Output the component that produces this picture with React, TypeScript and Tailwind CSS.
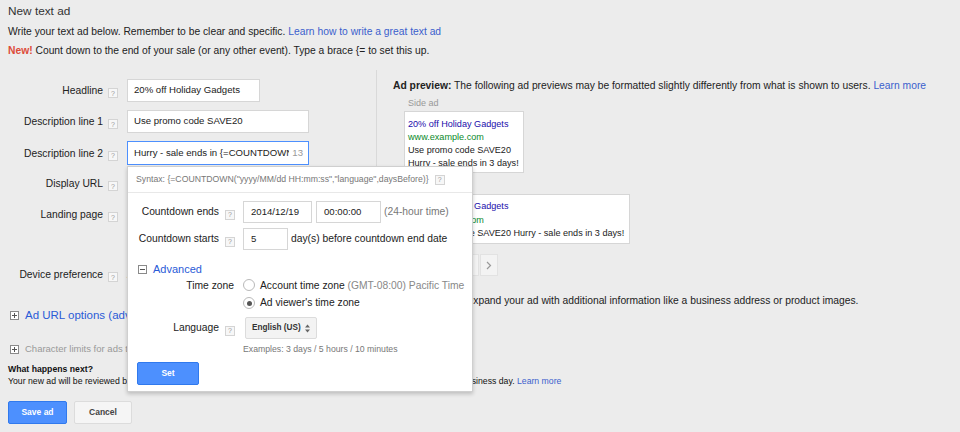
import React from "react";

const Help = () => (
  <span className="inline-flex w-[10px] h-[10px] shrink-0 items-center justify-center border border-[#d4d4d4] bg-[#f7f7f7] text-[7px] leading-none text-[#999]">
    ?
  </span>
);

const PlusBox = ({ minus = false }: { minus?: boolean }) => (
  <svg width="9" height="9" viewBox="0 0 9 9" className="shrink-0">
    <rect x="0.5" y="0.5" width="8" height="8" fill="#fff" stroke="#8a8a8a" />
    <line x1="2" y1="4.5" x2="7" y2="4.5" stroke="#555" />
    {!minus && <line x1="4.5" y1="2" x2="4.5" y2="7" stroke="#555" />}
  </svg>
);

const Radio = ({ checked = false }: { checked?: boolean }) => (
  <span className="inline-flex w-[12px] h-[12px] shrink-0 items-center justify-center rounded-full border border-[#b9b9b9] bg-white">
    {checked && <span className="w-[5px] h-[5px] rounded-full bg-[#555]" />}
  </span>
);

const FormRow = ({
  label,
  children,
  h = "h-[23px]",
}: {
  label: string;
  children?: React.ReactNode;
  h?: string;
}) => (
  <div className={`flex items-center ${h}`}>
    <div className="w-[95px] text-right text-[10.3px] leading-[13px] text-[#222]">{label}</div>
    <div className="ml-[5px]">
      <Help />
    </div>
    <div className="ml-[9px] flex items-center">{children}</div>
  </div>
);

const Input = ({ w, text }: { w: string; text: string }) => (
  <div className={`${w} h-[23px] flex items-center border border-[#d6d6d6] bg-white pl-[6px] text-[9.6px] text-[#222] whitespace-nowrap overflow-hidden`}>
    {text}
  </div>
);

export default function App() {
  return (
    <div className="relative w-[960px] h-[432px] overflow-hidden bg-[#ececec] px-[8px] pt-[4px] font-['Liberation_Sans','Arial',sans-serif] text-[#222]">
      {/* Header */}
      <div className="text-[11.8px] leading-[14px] text-[#333]">New text ad</div>
      <div className="mt-[7px] text-[10.3px] leading-[14px]">
        Write your text ad below. Remember to be clear and specific.{" "}
        <span className="text-[#3b5fcc]">Learn how to write a great text ad</span>
      </div>
      <div className="mt-[5px] text-[10.3px] leading-[14px]">
        <span className="font-bold text-[#dd4b39]">New!</span> Count down to the end of your sale (or any
        other event). Type a brace {"{="} to set this up.
      </div>

      {/* Columns */}
      <div className="mt-[12px] flex h-[256px]">
        {/* Left column */}
        <div className="w-[369px] shrink-0 border-r border-[#d9d9d9] pt-[9px]">
          <FormRow label="Headline">
            <Input w="w-[133px]" text="20% off Holiday Gadgets" />
          </FormRow>
          <div className="mt-[8px]">
            <FormRow label="Description line 1">
              <Input w="w-[182px]" text="Use promo code SAVE20" />
            </FormRow>
          </div>
          <div className="mt-[8px]">
            <FormRow label="Description line 2" h="h-[24px]">
              <div className="w-[182px] h-[24px] flex items-center border border-[#4d90fe] bg-white pl-[6px] pr-[5px] text-[9.6px]">
                <span className="flex-1 overflow-hidden whitespace-nowrap text-[#222]">
                  Hurry - sale ends in {"{=COUNTDOWN(\"2014/12/19"}
                </span>
                <span className="ml-[3px] text-[#999]">13</span>
              </div>
            </FormRow>
          </div>
          <div className="mt-[7px]">
            <FormRow label="Display URL">
              <Input w="w-[182px]" text="www.example.com" />
            </FormRow>
          </div>
          <div className="mt-[8px]">
            <FormRow label="Landing page">
              <Input w="w-[182px]" text="http://www.example.com" />
            </FormRow>
          </div>
          <div className="mt-[37px]">
            <FormRow label="Device preference">
              <span className="text-[10.3px]">All</span>
            </FormRow>
          </div>
          <div className="mt-[21px] flex h-[16px] items-center pl-[2px]">
            <PlusBox />
            <span className="ml-[6px] text-[11.5px] leading-[16px] text-[#2a5bd7]">Ad URL options (advanced)</span>
          </div>
        </div>

        {/* Right column */}
        <div className="flex-1 pl-[16px] pt-[9px]">
          <div className="text-[10.3px] leading-[13px] whitespace-nowrap">
            <span className="font-bold">Ad preview:</span> The following ad previews may be formatted slightly
            differently from what is shown to users.{" "}
            <span className="text-[#3b5fcc]">Learn more</span>
          </div>
          <div className="mt-[5px] ml-[15px] text-[9px] leading-[12px] text-[#999]">Side ad</div>
          <div className="mt-[2px] ml-[11px] w-[120px] border border-[#d6d6d6] bg-white pl-[3px] pt-[6px] pb-[2px] text-[9.1px] leading-[13px]">
            <div className="text-[#1a0dab]">20% off Holiday Gadgets</div>
            <div className="text-[#0a8a2a]">www.example.com</div>
            <div>Use promo code SAVE20</div>
            <div>Hurry - sale ends in 3 days!</div>
          </div>
          <div className="mt-[6px] ml-[15px] text-[9px] leading-[12px] text-[#999]">Top ad</div>
          <div className="mt-[3px] ml-[11px] w-[226px] h-[50px] border border-[#d6d6d6] bg-white pl-[3px] pt-[5px] text-[9.1px] leading-[13.5px]">
            <div className="text-[#1a0dab]">20% off Holiday Gadgets</div>
            <div className="text-[#0a8a2a]">www.example.com</div>
            <div className="whitespace-nowrap">Use promo code SAVE20 Hurry - sale ends in 3 days!</div>
          </div>
          <div className="mt-[10px] ml-[68px] flex gap-[1px]">
            <div className="w-[18px] h-[22px] flex items-center justify-center border border-[#e2e2e2] bg-[#f3f3f3]">
              <svg width="6" height="9" viewBox="0 0 6 9">
                <polyline points="5,1 1.5,4.5 5,8" fill="none" stroke="#999" strokeWidth="1.2" />
              </svg>
            </div>
            <div className="w-[18px] h-[22px] flex items-center justify-center border border-[#e2e2e2] bg-[#f3f3f3]">
              <svg width="6" height="9" viewBox="0 0 6 9">
                <polyline points="1,1 4.5,4.5 1,8" fill="none" stroke="#999" strokeWidth="1.2" />
              </svg>
            </div>
          </div>
          <div className="mt-[18px] ml-[7px] text-[10.3px] leading-[13px] whitespace-nowrap">
            Ad extensions expand your ad with additional information like a business address or product images.
          </div>
        </div>
      </div>

      {/* Bottom */}
      <div className="mt-[15px] flex h-[16px] items-center pl-[2px]">
        <PlusBox />
        <span className="ml-[6px] text-[9.5px] text-[#999]">Character limits for ads targeting double-width languages</span>
      </div>
      <div className="mt-[6px] text-[8.7px] leading-[12px] font-bold text-[#111]">What happens next?</div>
      <div className="text-[8.7px] leading-[12px] text-[#111] whitespace-nowrap">
        Your new ad will be reviewed by Google before it can start running on Google. Most reviews are completed
        within one business day. <span className="text-[#3b5fcc]">Learn more</span>
      </div>
      <div className="mt-[14px] flex gap-[7px]">
        <div className="w-[59px] h-[23px] flex items-center justify-center rounded-[2px] border border-[#3079ed] bg-[#4d90fe] text-[8.5px] font-bold text-white">
          Save ad
        </div>
        <div className="w-[58px] h-[23px] flex items-center justify-center rounded-[2px] border border-[#dcdcdc] bg-[#f5f5f5] text-[8.5px] font-bold text-[#444]">
          Cancel
        </div>
      </div>

      {/* Popup */}
      <div className="absolute left-[127px] top-[166px] w-[346px] h-[226px] border border-[#cfcfcf] bg-white shadow-[0_2px_4px_rgba(0,0,0,0.2)]">
        <div className="flex h-[26px] items-center gap-[6px] border-b border-[#e8e8e8] pl-[8px]">
          <span className="text-[8.7px] text-[#777] whitespace-nowrap">
            Syntax: {"{=COUNTDOWN(\"yyyy/MM/dd HH:mm:ss\",\"language\",daysBefore)}"}
          </span>
          <Help />
        </div>
        <div className="pt-[8px]">
          <div className="flex h-[22px] items-center">
            <div className="w-[91px] text-right text-[10.3px]">Countdown ends</div>
            <div className="ml-[6px]">
              <Help />
            </div>
            <div className="ml-[8px] w-[69px] h-[22px] flex items-center border border-[#d6d6d6] pl-[7px] text-[9.6px]">2014/12/19</div>
            <div className="ml-[4px] w-[65px] h-[22px] flex items-center border border-[#d6d6d6] pl-[7px] text-[9.6px]">00:00:00</div>
            <span className="ml-[3px] text-[10.3px] text-[#777]">(24-hour time)</span>
          </div>
          <div className="mt-[5px] flex h-[22px] items-center">
            <div className="w-[91px] text-right text-[10.3px]">Countdown starts</div>
            <div className="ml-[6px]">
              <Help />
            </div>
            <div className="ml-[8px] w-[45px] h-[22px] flex items-center border border-[#d6d6d6] pl-[7px] text-[9.6px]">5</div>
            <span className="ml-[3px] text-[10.3px]">day(s) before countdown end date</span>
          </div>
          <div className="mt-[12px] flex h-[14px] items-center pl-[10px]">
            <PlusBox minus />
            <span className="ml-[6px] text-[11px] text-[#2a5bd7]">Advanced</span>
          </div>
          <div className="mt-[3px] flex h-[14px] items-center">
            <div className="w-[106px] text-right text-[10.3px]">Time zone</div>
            <div className="ml-[9px]">
              <Radio />
            </div>
            <span className="ml-[5px] text-[10.3px] whitespace-nowrap">
              Account time zone <span className="text-[#888]">(GMT-08:00) Pacific Time</span>
            </span>
          </div>
          <div className="mt-[3px] flex h-[14px] items-center pl-[115px]">
            <Radio checked />
            <span className="ml-[5px] text-[10.3px]">Ad viewer's time zone</span>
          </div>
          <div className="mt-[7px] flex h-[22px] items-center">
            <div className="w-[91px] text-right text-[10.3px]">Language</div>
            <div className="ml-[6px]">
              <Help />
            </div>
            <div className="ml-[10px] w-[72px] h-[22px] flex items-center rounded-[2px] border border-[#dcdcdc] bg-[#f3f3f3] pl-[6px] text-[8.2px] font-bold text-[#333]">
              English (US)
              <svg width="5" height="9" viewBox="0 0 5 9" className="ml-[4px]">
                <polygon points="2.5,0.5 5,3.5 0,3.5" fill="#666" />
                <polygon points="0,5.5 5,5.5 2.5,8.5" fill="#666" />
              </svg>
            </div>
          </div>
          <div className="mt-[5px] pl-[115px] text-[8.7px] leading-[11px] text-[#777]">
            Examples: 3 days / 5 hours / 10 minutes
          </div>
          <div className="mt-[7px] ml-[9px] w-[62px] h-[23px] flex items-center justify-center rounded-[2px] border border-[#3079ed] bg-[#4d90fe] text-[8.5px] font-bold text-white">
            Set
          </div>
        </div>
      </div>
    </div>
  );
}
